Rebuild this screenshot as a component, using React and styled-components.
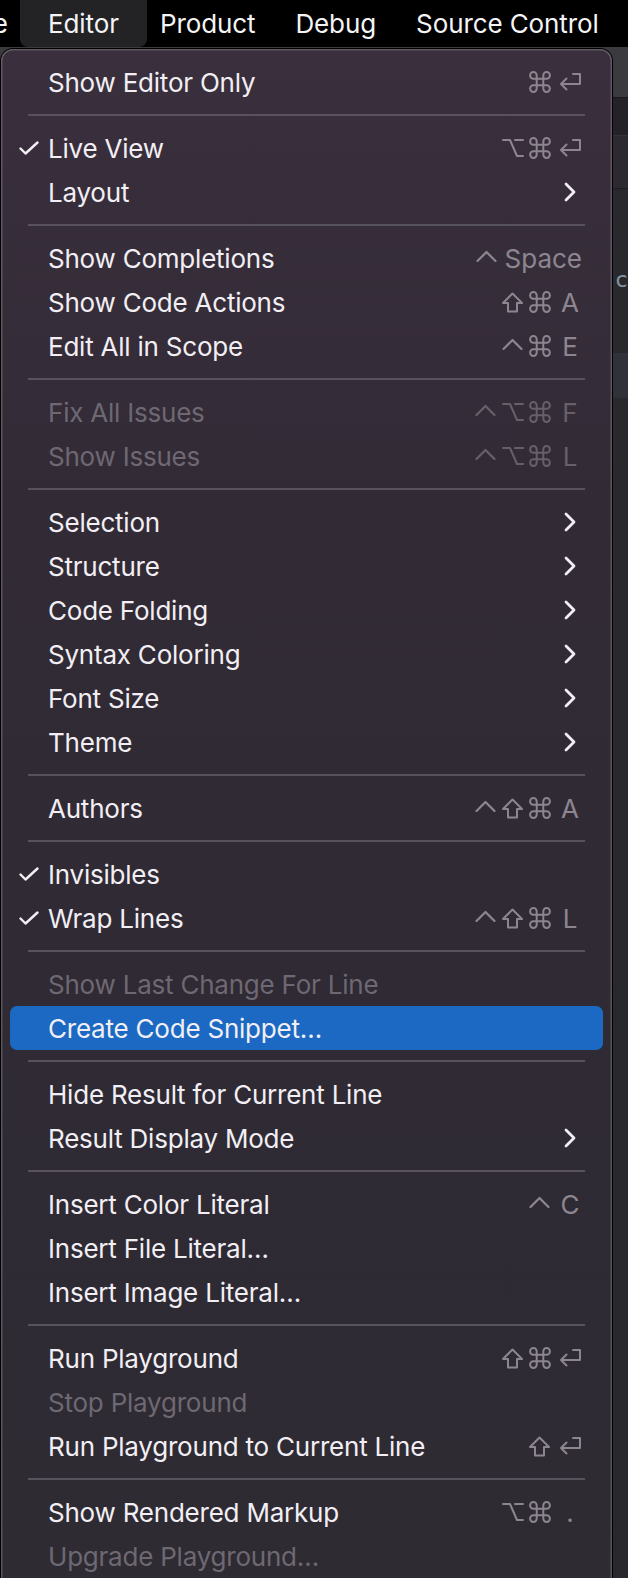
import React from 'react';
import styled, { createGlobalStyle } from 'styled-components';

const GlobalStyle = createGlobalStyle`
  html, body {
    margin: 0;
    padding: 0;
    background: #29292e;
  }
  body {
    font-family: Inter, "Noto Sans", "DejaVu Sans", sans-serif;
    -webkit-font-smoothing: antialiased;
  }
`;

const MENU = [
  { label: 'Show Editor Only', mods: ['cmd'], key: 'return' },
  'sep',
  { label: 'Live View', checked: true, mods: ['opt', 'cmd'], key: 'return' },
  { label: 'Layout', submenu: true },
  'sep',
  { label: 'Show Completions', mods: ['ctrl'], key: 'Space' },
  { label: 'Show Code Actions', mods: ['shift', 'cmd'], key: 'A' },
  { label: 'Edit All in Scope', mods: ['ctrl', 'cmd'], key: 'E' },
  'sep',
  { label: 'Fix All Issues', disabled: true, mods: ['ctrl', 'opt', 'cmd'], key: 'F' },
  { label: 'Show Issues', disabled: true, mods: ['ctrl', 'opt', 'cmd'], key: 'L' },
  'sep',
  { label: 'Selection', submenu: true },
  { label: 'Structure', submenu: true },
  { label: 'Code Folding', submenu: true },
  { label: 'Syntax Coloring', submenu: true },
  { label: 'Font Size', submenu: true },
  { label: 'Theme', submenu: true },
  'sep',
  { label: 'Authors', mods: ['ctrl', 'shift', 'cmd'], key: 'A' },
  'sep',
  { label: 'Invisibles', checked: true },
  { label: 'Wrap Lines', checked: true, mods: ['ctrl', 'shift', 'cmd'], key: 'L' },
  'sep',
  { label: 'Show Last Change For Line', disabled: true },
  { label: 'Create Code Snippet…', active: true },
  'sep',
  { label: 'Hide Result for Current Line' },
  { label: 'Result Display Mode', submenu: true },
  'sep',
  { label: 'Insert Color Literal', mods: ['ctrl'], key: 'C' },
  { label: 'Insert File Literal…' },
  { label: 'Insert Image Literal…' },
  'sep',
  { label: 'Run Playground', mods: ['shift', 'cmd'], key: 'return' },
  { label: 'Stop Playground', disabled: true },
  { label: 'Run Playground to Current Line', mods: ['shift'], key: 'return' },
  'sep',
  { label: 'Show Rendered Markup', mods: ['opt', 'cmd'], key: '.' },
  { label: 'Upgrade Playground…', disabled: true },
];

function Glyph({ name }) {
  if (name === 'cmd') {
    return (
      <GlyphSvg width='22' height='22' viewBox='2 2 20 20'>
        <path d='M15 6v12a3 3 0 1 0 3-3H6a3 3 0 1 0 3 3V6a3 3 0 1 0-3 3h12a3 3 0 1 0-3-3' strokeWidth='1.8' />
      </GlyphSvg>
    );
  }
  if (name === 'opt') {
    return (
      <GlyphSvg width='22' height='20' viewBox='0 0 22 20'>
        <path d='M1 2h7l7 16h6M13 2h8' strokeWidth='2' />
      </GlyphSvg>
    );
  }
  if (name === 'shift') {
    return (
      <GlyphSvg width='23' height='21' viewBox='0 0 23 21'>
        <path d='M11.5 1.5l9.5 9.5h-5v8.5h-9V11h-5z' strokeWidth='2' />
      </GlyphSvg>
    );
  }
  if (name === 'ctrl') {
    return (
      <GlyphSvg width='21' height='12' viewBox='0 0 21 12' $lift>
        <path d='M1.5 11l9-9 9 9' strokeWidth='2.2' />
      </GlyphSvg>
    );
  }
  if (name === 'return') {
    return (
      <GlyphSvg width='24' height='21' viewBox='0 0 24 21'>
        <path d='M15 2h7v10H3M8.5 6.5L3 12l5.5 5.5' strokeWidth='2' />
      </GlyphSvg>
    );
  }
  return null;
}

function Shortcut({ mods = [], keyName, disabled }) {
  return (
    <Keys $disabled={disabled}>
      {mods.map((m) => (
        <ModSlot key={m}>
          <Glyph name={m} />
        </ModSlot>
      ))}
      <KeySlot>{keyName === 'return' ? <Glyph name='return' /> : keyName}</KeySlot>
    </Keys>
  );
}

function MenuRow({ item }) {
  return (
    <Row $active={item.active} $disabled={item.disabled}>
      <CheckCol>
        {item.checked && (
          <svg width='20' height='14' viewBox='0 0 20 14' fill='none'>
            <path d='M1.5 7.5l5 5L18.5 1.5' stroke='#f2eff4' strokeWidth='2.4' strokeLinecap='round' strokeLinejoin='round' />
          </svg>
        )}
      </CheckCol>
      <Label>{item.label}</Label>
      {item.key && <Shortcut mods={item.mods} keyName={item.key} disabled={item.disabled} />}
      {item.submenu && (
        <Keys>
          <KeySlot>
            <svg width='12' height='20' viewBox='0 0 12 20' fill='none'>
              <path d='M2 2l8 8-8 8' stroke='#f2eff4' strokeWidth='2.8' strokeLinecap='round' strokeLinejoin='round' />
            </svg>
          </KeySlot>
        </Keys>
      )}
    </Row>
  );
}

export default function App() {
  return (
    <>
      <GlobalStyle />
      <Screen>
        <MenuBar>
          <ClippedItem>
            <span>Navigate</span>
          </ClippedItem>
          <BarItem $open>Editor</BarItem>
          <BarItem>Product</BarItem>
          <BarItem>Debug</BarItem>
          <BarItem>Source Control</BarItem>
        </MenuBar>
        <Workspace>
          <Toolbar />
          <TabBar />
          <JumpBar />
          <Editor>
            <CodeLine $height={104}>
              <CodeText>.c</CodeText>
            </CodeLine>
            <CurrentLine />
          </Editor>
          <Dropdown>
            {MENU.map((item, i) =>
              item === 'sep' ? (
                <Separator key={'s' + i} />
              ) : (
                <MenuRow key={item.label} item={item} />
              )
            )}
          </Dropdown>
        </Workspace>
      </Screen>
    </>
  );
}

const Screen = styled.div`
  width: 628px;
  height: 1578px;
  overflow: hidden;
  display: flex;
  flex-direction: column;
  background: #29292e;
`;

const MenuBar = styled.div`
  height: 47px;
  flex: none;
  background: #000;
  display: flex;
  align-items: stretch;
  overflow: hidden;
  white-space: nowrap;
`;

const BarItem = styled.div`
  flex: none;
  display: flex;
  align-items: center;
  padding: ${(p) => (p.$open ? '0 28px' : '0 20px')};
  margin: ${(p) => (p.$open ? '0 -7px 0 0' : '0')};
  color: #f4f4f6;
  font-size: 26px;
  letter-spacing: -0.1px;
  background: ${(p) => (p.$open ? '#232325' : 'transparent')};
  border-radius: 0 0 8px 8px;
`;

const ClippedItem = styled.div`
  flex: none;
  width: 20px;
  display: flex;
  justify-content: flex-end;
  align-items: center;
  overflow: hidden;
  padding-right: 12px;
  box-sizing: border-box;
  color: #f4f4f6;
  font-size: 26px;
`;

const Workspace = styled.div`
  position: relative;
  flex: 1;
  display: flex;
  flex-direction: column;
`;

const Toolbar = styled.div`
  height: 50px;
  background: #3b3a3e;
  border-bottom: 1px solid #1a181c;
`;

const TabBar = styled.div`
  height: 37px;
  background: #242127;
  border-bottom: 1px solid #343138;
`;

const JumpBar = styled.div`
  height: 52px;
  background: #2c2930;
  border-bottom: 1px solid #1e1c21;
`;

const Editor = styled.div`
  flex: 1;
  background: #29292d;
  display: flex;
  flex-direction: column;
`;

const CodeLine = styled.div`
  height: ${(p) => p.$height}px;
  display: flex;
  justify-content: flex-end;
  align-items: flex-end;
`;

const CodeText = styled.span`
  font-family: "DejaVu Sans Mono", monospace;
  font-size: 22px;
  line-height: 26px;
  color: #8793a3;
`;

const CurrentLine = styled.div`
  margin-top: 60px;
  height: 45px;
  background: #303139;
`;

const Dropdown = styled.div`
  position: absolute;
  top: 2px;
  left: 1px;
  width: 611px;
  box-sizing: border-box;
  padding: 11px 9px;
  border-radius: 12px 12px 0 0;
  background: linear-gradient(180deg, #3a2f3d 0%, #322b36 30%, #2f2a34 60%, #2e2b33 100%);
  box-shadow: 0 0 0 1px #000, inset 0 0 0 1.5px rgba(255, 255, 255, 0.2);
`;

const Row = styled.div`
  height: 44px;
  display: flex;
  align-items: center;
  padding: 0 21px 0 0;
  border-radius: 7px;
  background: ${(p) => (p.$active ? '#1b69c3' : 'transparent')};
  color: ${(p) => (p.$disabled ? '#6e6872' : '#f2eff4')};
  font-size: 26px;
  white-space: nowrap;
`;

const CheckCol = styled.div`
  width: 38px;
  flex: none;
  display: flex;
  align-items: center;
  padding-left: 9px;
  box-sizing: border-box;
`;

const Label = styled.span`
  flex: 1;
  letter-spacing: -0.22px;
`;

const Keys = styled.div`
  display: flex;
  align-items: center;
  color: ${(p) => (p.$disabled ? '#676069' : '#8d8690')};
`;

const ModSlot = styled.span`
  width: 27px;
  display: flex;
  justify-content: center;
  align-items: center;
`;

const KeySlot = styled.span`
  min-width: 24px;
  margin-left: 5px;
  display: flex;
  justify-content: center;
  align-items: center;
`;

const GlyphSvg = styled.svg`
  fill: none;
  stroke: currentColor;
  stroke-linecap: round;
  stroke-linejoin: round;
  margin-bottom: ${(p) => (p.$lift ? '5px' : '0')};
`;

const Separator = styled.div`
  height: 22px;
  display: flex;
  align-items: center;
  padding: 0 18px;

  &::after {
    content: '';
    flex: 1;
    height: 2px;
    background: #57525c;
  }
`;
